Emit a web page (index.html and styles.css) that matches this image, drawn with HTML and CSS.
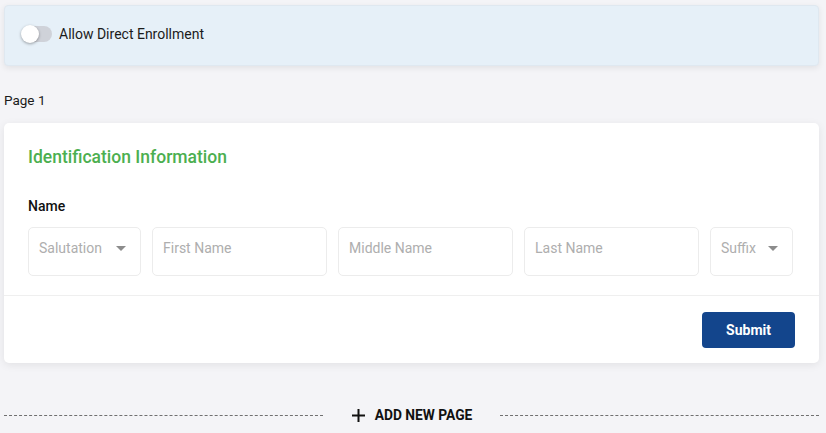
FILE: index.html
```html
<!DOCTYPE html>
<html lang="en">
  <head>
    <meta charset="utf-8" />
    <title>Form Builder</title>
    <link rel="stylesheet" href="styles.css">
  </head>
  <body>
    <div class="wrap">
      <div class="enroll-bar">
        <span class="toggle"><span class="knob"></span></span>
        <span class="enroll-label">Allow Direct Enrollment</span>
      </div>

      <div class="page-label">Page 1</div>

      <div class="card">
        <div class="card-body">
          <h2 class="section-title">Identification Information</h2>
          <div class="field-label">Name</div>
          <div class="name-row">
            <div class="input select salutation"><span>Salutation</span><i class="caret"></i></div>
            <div class="input grow"><span>First Name</span></div>
            <div class="input grow"><span>Middle Name</span></div>
            <div class="input grow"><span>Last Name</span></div>
            <div class="input select suffix"><span>Suffix</span><i class="caret"></i></div>
          </div>
        </div>
        <div class="card-foot">
          <button class="submit">Submit</button>
        </div>
      </div>

      <div class="add-page">
        <span class="dash"></span>
        <span class="add-btn">
          <svg width="15" height="15" viewBox="0 0 15 15"><path d="M7.5 1v13M1 7.5h13" stroke="#111" stroke-width="2" fill="none"/></svg>
          ADD NEW PAGE
        </span>
        <span class="dash"></span>
      </div>
    </div>
  </body>
</html>
```

FILE: styles.css
```css
body {
  margin: 0;
  background: #f4f4f7;
  font-family: Roboto, "Liberation Sans", sans-serif;
  color: #1b1b1b;
}

.wrap {
  padding: 5px 7px 0 4px;
}

.enroll-bar {
  display: flex;
  align-items: center;
  height: 61px;
  padding: 0 0 4px 17px;
  background: #e6f0f8;
  border: 1px solid #dfe8f0;
  border-radius: 4px;
  box-sizing: border-box;
  box-shadow: 0 2px 6px rgba(0, 0, 0, 0.08);
}

.toggle {
  position: relative;
  width: 30px;
  height: 16px;
  border-radius: 8px;
  background: #cfd2d9;
  margin-right: 8px;
}

.knob {
  position: absolute;
  left: -1px;
  top: -1px;
  width: 18px;
  height: 18px;
  border-radius: 50%;
  background: #fff;
  box-shadow: 0 1px 3px rgba(0, 0, 0, 0.35);
}

.enroll-label {
  font-size: 14px;
  margin-left: -1px;
}

.page-label {
  font-size: 13.5px;
  margin: 25px 0 14px;
  line-height: 18px;
}

.card {
  background: #fff;
  border-radius: 5px;
  box-shadow: 0 2px 8px rgba(0, 0, 0, 0.08);
}

.card-body {
  padding: 24px 24px 19px;
  border-bottom: 1px solid #efefef;
}

.section-title {
  margin: 0;
  font-size: 17.5px;
  font-weight: 500;
  color: #4caf50;
  line-height: 20px;
}

.field-label {
  margin-top: 31px;
  font-size: 14px;
  font-weight: 500;
  color: #111;
  line-height: 16px;
}

.name-row {
  display: flex;
  gap: 11px;
  margin-top: 13px;
}

.input {
  display: flex;
  align-items: flex-start;
  height: 49px;
  box-sizing: border-box;
  padding: 12px 10px 0;
  border: 1px solid #ececec;
  border-radius: 5px;
  font-size: 14px;
  color: #aeaeae;
  line-height: 16px;
}

.grow {
  flex: 1;
}

.salutation {
  width: 113px;
  padding-right: 14px;
}

.suffix {
  width: 83px;
  margin-right: 2px;
  padding-right: 14px;
}

.select {
  justify-content: space-between;
}

.caret {
  margin-top: 6px;
  width: 0;
  height: 0;
  border-left: 5px solid transparent;
  border-right: 5px solid transparent;
  border-top: 5px solid #8c8c8c;
}

.card-foot {
  display: flex;
  justify-content: flex-end;
  padding: 16px 24px 15px;
}

.submit {
  width: 93px;
  height: 36px;
  border: none;
  border-radius: 4px;
  background: #13458c;
  color: #fff;
  font-family: Roboto, "Liberation Sans", sans-serif;
  font-size: 14px;
  font-weight: 700;
}

.add-page {
  display: flex;
  align-items: center;
  gap: 28px;
  margin-top: 44px;
}

.dash {
  flex: 1;
  border-top: 1.5px dashed #707070;
}

.add-btn {
  display: flex;
  align-items: center;
  gap: 9px;
  font-size: 13.8px;
  font-weight: 700;
  color: #111;
}
```
